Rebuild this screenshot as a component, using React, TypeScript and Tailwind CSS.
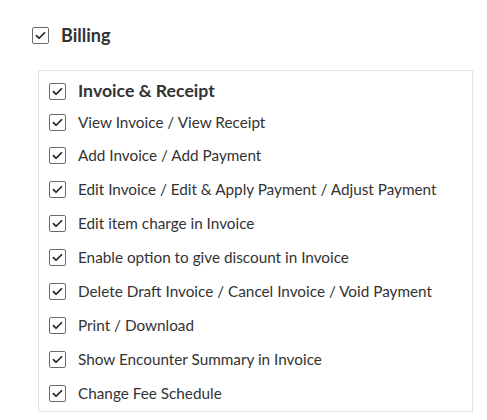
const items = [
  "View Invoice / View Receipt",
  "Add Invoice / Add Payment",
  "Edit Invoice / Edit & Apply Payment / Adjust Payment",
  "Edit item charge in Invoice",
  "Enable option to give discount in Invoice",
  "Delete Draft Invoice / Cancel Invoice / Void Payment",
  "Print / Download",
  "Show Encounter Summary in Invoice",
  "Change Fee Schedule",
];

function Check() {
  return (
    <span className="flex h-[17px] w-[17px] shrink-0 items-center justify-center rounded-[2px] border border-[#6a6a6a] bg-white">
      <svg viewBox="0 0 16 16" className="h-[13px] w-[13px]" fill="none">
        <path d="M3 8.2l3.2 3.2L13 4.6" stroke="#222" strokeWidth="2.1" strokeLinecap="round" strokeLinejoin="round" />
      </svg>
    </span>
  );
}

export default function App() {
  return (
    <div className="h-[420px] w-[487px] bg-white font-['Lato','Liberation_Sans',sans-serif] text-[#333]">
      <div className="flex items-center gap-[12px] pl-[32px] pt-[26px]">
        <Check />
        <span className="text-[18px] font-bold leading-[18px]">Billing</span>
      </div>
      <div className="ml-[38px] mt-[26px] w-[435px] border border-[#e2e2e2] pb-[8px] pl-[10px] pt-[10px]">
        <div className="mb-[-3px] flex h-[20px] items-center gap-[12px]">
          <Check />
          <span className="text-[17.7px] font-bold">Invoice &amp; Receipt</span>
        </div>
        {items.map((x, i) => (
          <div key={x} className={`flex h-[20px] items-center gap-[12px] ${i === 0 ? "mt-[14px]" : "mt-[13.9px]"}`}>
            <Check />
            <span className="text-[15.3px]">{x}</span>
          </div>
        ))}
      </div>
    </div>
  );
}
